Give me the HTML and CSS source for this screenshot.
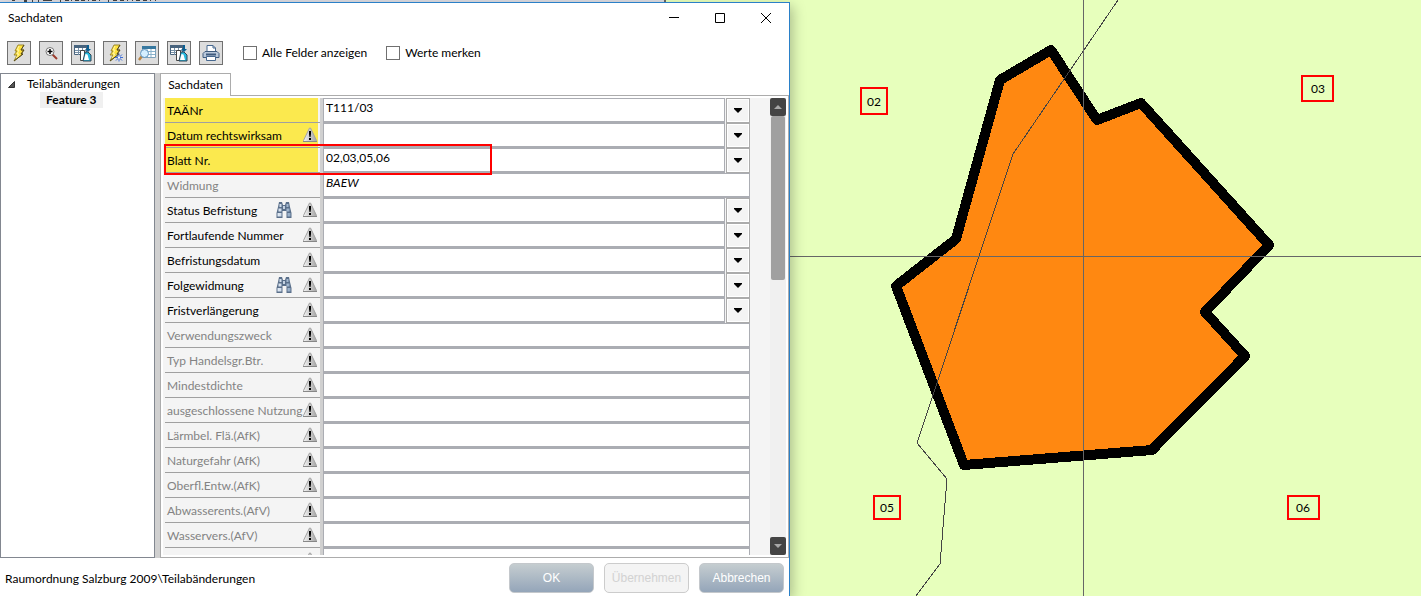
FILE: index.html
```html
<!DOCTYPE html>
<html lang="de">
<head>
<meta charset="utf-8">
<title>Sachdaten</title>
<link rel="stylesheet" href="styles.css">
</head>
<body>
<svg class="defs" aria-hidden="true">
  <defs>
    <linearGradient id="metal" x1="0" x2="1"><stop offset="0" stop-color="#f4f4f4"/><stop offset="1" stop-color="#a4a4a4"/></linearGradient>
    <linearGradient id="glass" x1="0" x2="1"><stop offset="0" stop-color="#e6eef7"/><stop offset="1" stop-color="#8fa8c4"/></linearGradient>
    <symbol id="warn" viewBox="0 0 16 16">
      <path d="M7.500 1h1l6 12.500v1h-13v-1z" fill="url(#metal)" stroke="#a4a4a4" stroke-width="1"/>
      <path d="M1 14.500h14" stroke="#888"/>
      <path d="M7 4h2v3l-.5 3h-1L7 7zM7 11h2v2H7z" fill="#000"/>
    </symbol>
    <symbol id="bino" viewBox="0 0 16 16">
      <path d="M3 0h3l1 3h2l1-3h3l1 5 1.500 6v5h-5V9H6.500v7h-6v-5L2 5z" fill="#5a6f8a"/>
      <path d="M3.500 2h2v3h-2zM10.500 2h2v3h-2zM2.500 6.500h3v3h-3zM10.500 6.500h3v3h-3zM1.500 11h4v3.500h-4zM11.500 11h3v3.500h-3z" fill="url(#glass)"/>
      <path d="M7 4h2v3H7z" fill="#c4d2e2"/>
    </symbol>
    <symbol id="bolt" viewBox="0 0 18 18">
      <path d="M8 1h6l-3 5h3l-3 4h2L4 17l3-6H4l3-4H5z" fill="#ffe23a" stroke="#9b8730" stroke-width="1"/>
      <path d="M9 2L7 6h2l-2 4h2l-3 4" fill="none" stroke="#fff7a8"/>
      <path d="M14 1l-3 5h3l-3 4h2l-9 7" fill="none" stroke="#54491c"/>
    </symbol>
    <symbol id="sheet" viewBox="0 0 18 18">
      <path d="M.5 1.500h12v9H.5z" fill="#fff" stroke="#48647e"/>
      <path d="M0 1h13v3H0z" fill="#48647e"/>
      <path d="M1 6.500h12M1 8.500h12M4.500 4v7M8.500 4v7" stroke="#7891a7"/>
      <path d="M6.500 6.500h4v10h-4z" fill="#fff" stroke="#444"/>
      <path d="M11 8h3l3 3v6H9z" fill="#25b7dd" stroke="#345"/>
      <path d="M10 16l1.500-6 2 .5 1.500 5.500z" fill="#fff"/>
      <path d="M13 1h2v4h2l-3 3-3-3h2z" fill="#0b5f91"/>
    </symbol>
  </defs>
</svg>

<main class="screen">
  <section class="left">
    <div class="behind">
      <svg class="behind-marks" viewBox="0 0 160 2" aria-hidden="true">
        <path d="M12 0h3v1h-3zM24 0h3v2h-3zM32 0h1v2h-1zM38 0h1v2h-1zM43 0h9v1h-9zM60 0h1v2h-1zM65 0h4v1h-4zM71 0h1v1h-1zM75 0h4v1h-4zM81 0h4v1h-4zM88 0h1v1h-1zM92 0h4v1h-4zM99 0h1v1h-1zM108 0h1v2h-1zM113 0h4v1h-4zM120 0h4v1h-4zM127 0h1v1h-1zM132 0h1v1h-1zM136 0h4v1h-4zM143 0h4v1h-4zM150 0h1v1h-1zM155 0h1v1h-1z" fill="#444"/>
      </svg>
      <span class="behind-edge"></span>
    </div>
    <div class="dialog" role="dialog" aria-labelledby="dlg-title">
      <header class="titlebar">
        <h1 id="dlg-title">Sachdaten</h1>
        <div class="window-buttons">
          <button type="button" aria-label="Minimieren"><svg viewBox="0 0 11 11"><path d="M0 4.500h10" stroke="#000"/></svg></button>
          <button type="button" aria-label="Maximieren"><svg viewBox="0 0 11 11"><path d="M.5.500h9v9h-9z" fill="none" stroke="#000"/></svg></button>
          <button type="button" aria-label="Schließen"><svg viewBox="0 0 11 11"><path d="M0 0l10 10M10 0L0 10" stroke="#000"/></svg></button>
        </div>
      </header>

      <div class="toolbar">
        <div class="tools">
          <button type="button" aria-label="Ausführen"><svg viewBox="0 0 18 18"><use href="#bolt"/></svg></button>
          <button type="button" aria-label="Zoomen"><svg viewBox="0 0 18 18"><path d="M10 10l5 5" stroke="#9b3c2c" stroke-width="2"/><circle cx="8" cy="7.500" r="4" fill="#fff" stroke="#777"/><path d="M8 5v5M5.500 7.500h5" stroke="#000" stroke-width="1.500"/></svg></button>
          <button type="button" aria-label="Daten übernehmen"><svg viewBox="0 0 18 18"><use href="#sheet"/></svg></button>
          <button type="button" aria-label="Neu ausführen"><svg viewBox="0 0 18 18"><use href="#bolt"/><path d="M13 9.500v8M9 13.500h8M10 10.500l6 6M16 10.500l-6 6" stroke="#3f6fd8"/><path d="M12 12.500h2v2h-2z" fill="#fff"/></svg></button>
          <button type="button" aria-label="Tabelle suchen"><svg viewBox="0 0 18 18"><path d="M4.500 2.500h13v11h-13z" fill="#fff" stroke="#7da2bb"/><path d="M4 2h14v3H4z" fill="#37789f"/><path d="M5 7.500h12M5 10.500h12M9 5v8M13 5v8" stroke="#8ab3cc"/><path d="M4 12l-3 4" stroke="#b98545" stroke-width="2.500"/><circle cx="6.500" cy="9.500" r="4" fill="#d5efff" stroke="#6294bc"/></svg></button>
          <button type="button" aria-label="Daten einfügen"><svg viewBox="0 0 18 18"><use href="#sheet"/></svg></button>
          <button type="button" aria-label="Drucken"><svg viewBox="0 0 18 18"><path d="M5 8V1.500h6L13.500 4v4" fill="#fff" stroke="#47688f"/><path d="M11 1.500V4h2.500" fill="none" stroke="#47688f"/><path d="M3 7.500h12l2 2v4H1v-4z" fill="#b9c8db" stroke="#405c7e"/><path d="M4 10.500h10" stroke="#405c7e" stroke-width="2"/><path d="M4.500 12.500h9v4h-9z" fill="#fff" stroke="#47688f"/></svg></button>
        </div>
        <label class="check"><input type="checkbox"><span>Alle Felder anzeigen</span></label>
        <label class="check"><input type="checkbox"><span>Werte merken</span></label>
      </div>

      <div class="panes">
        <nav class="tree" aria-label="Features">
          <div class="tree-root"><svg viewBox="0 0 7 7" aria-hidden="true"><path d="M6.500.500v6h-6z" fill="#555" stroke="#333"/></svg><span>Teilabänderungen</span></div>
          <div class="tree-item"><span>Feature 3</span></div>
        </nav>
        <div class="splitter"></div>
        <div class="tabs">
          <div class="tab-strip" role="tablist"><button class="tab" type="button" role="tab" aria-selected="true">Sachdaten</button></div>
          <div class="tab-page" role="tabpanel">
            <div class="fields" id="fields"></div>
            <div class="scrollbar" aria-hidden="true">
              <button type="button" tabindex="-1"><svg viewBox="0 0 8 4"><path d="M0 4l4-4 4 4z" fill="#a8a8a8"/></svg></button>
              <div class="track"><div class="thumb"></div></div>
              <button type="button" tabindex="-1"><svg viewBox="0 0 8 4"><path d="M0 0l4 4 4-4z" fill="#a8a8a8"/></svg></button>
            </div>
          </div>
        </div>
      </div>

      <footer class="footer">
        <span>Raumordnung Salzburg 2009\Teilabänderungen</span>
        <div class="actions">
          <button type="button">OK</button>
          <button type="button" disabled>Übernehmen</button>
          <button type="button">Abbrechen</button>
        </div>
      </footer>
    </div>
  </section>

  <section class="map" aria-label="Karte">
    <svg viewBox="790 0 631 596" preserveAspectRatio="xMidYMid slice">
      <path class="parcel" d="M1051 50L1000 80L956 239L896 286L964 465L1152 450L1245 356L1205 312L1269 245L1141 103L1097 120z"/>
      <path class="boundary" d="M1118 0L1013 154L917 443L947 479L940 564L916 596"/>
      <path class="gridline" d="M790 256.500H1421M1083.500 0V596"/>
      <g class="sheet-label"><rect x="861" y="88" width="26" height="26"/><text x="874" y="106">02</text></g>
      <g class="sheet-label"><rect x="1302" y="76" width="31" height="25"/><text x="1318" y="93">03</text></g>
      <g class="sheet-label"><rect x="874" y="496" width="26" height="23"/><text x="887" y="512">05</text></g>
      <g class="sheet-label"><rect x="1288" y="496" width="31" height="23"/><text x="1303" y="512">06</text></g>
    </svg>
  </section>
</main>
<script src="fields.js"></script>
</body>
</html>
```

FILE: styles.css
```css
* { box-sizing: border-box; }

body {
  margin: 0;
  background: #e7ffbc;
  color: #000;
  font: 12px/16px Lato, "Open Sans", sans-serif;
}

button, input { font: inherit; color: inherit; margin: 0; }
button { padding: 0; }
svg { display: block; }
.defs { position: absolute; width: 0; height: 0; }

.screen {
  display: grid;
  grid-template-columns: 790fr 631fr;
  height: 100vh;
  overflow: hidden;
}

.left {
  display: flex;
  flex-direction: column;
  min-width: 0;
  min-height: 0;
  z-index: 1;
}

.behind { display: flex; height: 2px; }
.behind-marks { width: 160px; height: 2px; background: #dcdce2; }
.behind-edge {
  width: 506px;
  background: #dcdce2;
  border-right: 2px solid #666;
}

.dialog {
  flex: 1;
  min-height: 0;
  display: flex;
  flex-direction: column;
  background: #fff;
  border: solid #2a80c8;
  border-width: 1px 1px 0 0;
  box-shadow: 3px 4px 12px rgba(0, 0, 0, 0.25);
}

.titlebar {
  display: flex;
  justify-content: space-between;
  align-items: center;
  height: 30px;
  padding: 0 0 0 8px;
}
.titlebar h1 { margin: 0; font-size: 12px; font-weight: 400; }
.window-buttons { display: flex; }
.window-buttons button {
  display: grid;
  place-items: center;
  width: 46px;
  height: 29px;
  border: 0;
  background: none;
}
.window-buttons svg { width: 11px; height: 11px; }

.toolbar {
  display: flex;
  align-items: center;
  height: 40px;
  padding: 0 7px;
}
.tools { display: flex; gap: 8px; margin-right: 20px; }
.tools button {
  display: grid;
  place-items: center;
  width: 24px;
  height: 24px;
  border: 1px solid #707070;
  background: #ddd;
}
.tools svg { width: 18px; height: 18px; }

.check { display: flex; align-items: center; gap: 5px; margin-right: 19px; }
.check input {
  appearance: none;
  width: 14px;
  height: 14px;
  border: 1px solid #707070;
  background: #fff;
}

.panes { flex: 1; min-height: 0; display: flex; }

.tree {
  width: 155px;
  border: 1px solid #828790;
  padding: 2px 0 0 7px;
}
.tree-root { display: flex; align-items: center; gap: 12px; }
.tree-root svg { width: 7px; height: 7px; }
.tree-item { padding-left: 32px; font-weight: 700; }
.tree-item span { display: inline-block; padding: 0 6px; background: #f0f0f0; }

.splitter { width: 5px; background: #d0d0d0; }

.tabs { flex: 1; min-width: 0; display: flex; flex-direction: column; }
.tab-strip { display: flex; height: 22px; }
.tab {
  width: 71px;
  height: 23px;
  border: 1px solid #acacac;
  border-bottom: 0;
  background: #fff;
  z-index: 1;
}
.tab-page {
  flex: 1;
  min-height: 0;
  display: flex;
  border: 1px solid #acacac;
  padding: 2px;
}

.fields {
  flex: 1;
  min-width: 0;
  overflow: hidden;
  background: #f4f4f4;
  padding: 0 20px 0 2px;
}
.row {
  position: relative;
  display: grid;
  grid-template-columns: 155px 3px 1fr;
  height: 25px;
}
.name {
  display: flex;
  align-items: center;
  gap: 10px;
  height: 25px;
  padding: 0 2px;
  border-bottom: 1px solid #a0a0a0;
  white-space: nowrap;
}
.name label { flex: 1; width: 0; padding-top: 1px; }
.name svg { width: 16px; height: 16px; }
.required .name { background: linear-gradient(#fbe94e, #fbe94e) 0 0 / 153px 100% no-repeat #f4f4f4; }
.locked .name { color: #838383; }
.gap { background: #d0d0d0; }

.value { display: flex; min-width: 0; gap: 1px; }
.value input {
  flex: 1;
  min-width: 0;
  height: 25px;
  border: 1px solid #abadb3;
  border-bottom-width: 2px;
  border-radius: 0;
  padding: 0 2px 6px;
  background: #fff;
}
.locked .value input { font-style: italic; }
.drop {
  display: grid;
  place-items: center;
  width: 24px;
  height: 25px;
  border: 1px solid #ababab;
  background: #f4f4f4;
  box-shadow: inset 0 0 0 1px #fff;
}
.drop svg { width: 8px; height: 5px; }

.highlight {
  position: absolute;
  z-index: 1;
  top: -4px;
  left: -1px;
  width: 328px;
  height: 31px;
  border: 2px solid #f00;
}

.scrollbar { width: 16px; display: flex; flex-direction: column; background: #f0f0f0; }
.scrollbar button {
  display: grid;
  place-items: center;
  height: 18px;
  border: 0;
  border-radius: 2px;
  background: #444;
}
.scrollbar svg { width: 8px; height: 4px; }
.track { flex: 1; padding: 0 1px; }
.thumb { height: 39%; background: #a0a0a0; border-radius: 2px; }

.footer {
  display: flex;
  align-items: center;
  justify-content: space-between;
  height: 38px;
  padding: 2px 5px 0;
}
.footer > span { padding-top: 2px; }
.actions { display: flex; gap: 10px; }
.actions button {
  width: 85px;
  height: 30px;
  border: 1px solid #c4c8cc;
  border-radius: 5px;
  background: linear-gradient(#c5cdd0, #94a5b9);
  color: #fff;
  font: 12px/16px "Liberation Sans", Arial, sans-serif;
}
.actions button:disabled { border-color: #ccc; background: #f4f4f4; color: #d2d2d2; }

.map { min-width: 0; min-height: 0; background: #e7ffbc; }
.map svg { width: 100%; height: 100%; }
.parcel {
  fill: #ff8811;
  stroke: #000;
  stroke-width: 10;
  stroke-linejoin: round;
  shape-rendering: crispEdges;
}
.boundary { fill: none; stroke: #444; stroke-width: 1; shape-rendering: crispEdges; }
.gridline { fill: none; stroke: #666; stroke-width: 1; shape-rendering: crispEdges; }
.sheet-label rect { fill: none; stroke: #f00; stroke-width: 2; }
.sheet-label text { text-anchor: middle; font-size: 12px; }
```

FILE: fields.js
```js
// kind: required (yellow), editable, or locked (greyed label, no drop-down)
const fields = [
  { name: "TAÄNr", kind: "required", value: "T111/03" },
  { name: "Datum rechtswirksam", kind: "required", warn: true },
  { name: "Blatt Nr.", kind: "required", value: "02,03,05,06", highlight: true },
  { name: "Widmung", kind: "locked", value: "BAEW" },
  { name: "Status Befristung", kind: "editable", warn: true, search: true },
  { name: "Fortlaufende Nummer", kind: "editable", warn: true },
  { name: "Befristungsdatum", kind: "editable", warn: true },
  { name: "Folgewidmung", kind: "editable", warn: true, search: true },
  { name: "Fristverlängerung", kind: "editable", warn: true },
  { name: "Verwendungszweck", kind: "locked", warn: true },
  { name: "Typ Handelsgr.Btr.", kind: "locked", warn: true },
  { name: "Mindestdichte", kind: "locked", warn: true },
  { name: "ausgeschlossene Nutzung", kind: "locked", warn: true },
  { name: "Lärmbel. Flä.(AfK)", kind: "locked", warn: true },
  { name: "Naturgefahr (AfK)", kind: "locked", warn: true },
  { name: "Oberfl.Entw.(AfK)", kind: "locked", warn: true },
  { name: "Abwasserents.(AfV)", kind: "locked", warn: true },
  { name: "Wasservers.(AfV)", kind: "locked", warn: true },
  { name: "", kind: "locked", warn: true }
];

const icon = id => `<svg viewBox="0 0 16 16" aria-hidden="true"><use href="#${id}"/></svg>`;

document.getElementById("fields").innerHTML = fields.map((f, i) => `
  <div class="row ${f.kind}">
    <div class="name"><label for="f${i}">${f.name}</label>${f.search ? icon("bino") : ""}${f.warn ? icon("warn") : ""}</div>
    <div class="gap"></div>
    <div class="value">
      <input id="f${i}" type="text" value="${f.value || ""}"${f.kind === "locked" ? " readonly" : ""}>
      ${f.kind === "locked" ? "" : `<button class="drop" type="button" aria-label="Auswahl öffnen"><svg viewBox="0 0 8 5"><path d="M0 0h8v1L4 5 0 1z"/></svg></button>`}
    </div>
    ${f.highlight ? '<div class="highlight"></div>' : ""}
  </div>`).join("");
```
